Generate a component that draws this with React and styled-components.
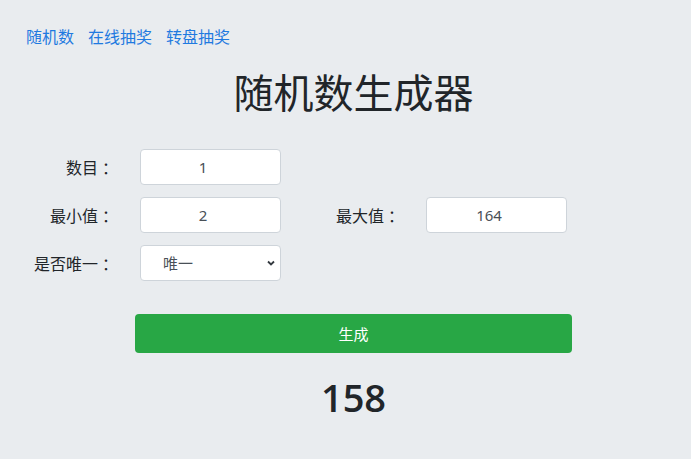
import React, { useState } from 'react'
import styled, { createGlobalStyle } from 'styled-components'

const GlobalStyle = createGlobalStyle`
  html, body {
    margin: 0;
    padding: 0;
    background: #e9ecef;
  }
  body {
    font-family: "Noto Sans", "Noto Sans CJK SC", sans-serif;
    font-size: 16px;
    color: #212529;
  }
`

const Page = styled.div`
  min-height: 459px;
  padding: 25px 0 0 26px;
  box-sizing: border-box;
`

const Nav = styled.nav`
  display: flex;
  gap: 14px;
  line-height: 24px;
`

const NavLink = styled.a`
  color: #1f7ae0;
  text-decoration: none;
  font-size: 16px;
`

const Main = styled.div`
  width: 437px;
  margin-left: 109px;
  display: flex;
  flex-direction: column;
  align-items: center;
`

const Title = styled.h1`
  margin: 20px 0 32px;
  font-size: 40px;
  font-weight: 400;
  line-height: 48px;
  white-space: nowrap;
`

const Form = styled.div`
  align-self: stretch;
  margin-left: -109px;
  display: flex;
  flex-direction: column;
  gap: 12px;
`

const Row = styled.div`
  display: flex;
  align-items: center;
  height: 36px;
`

const Label = styled.label`
  width: ${p => p.$width}px;
  margin-right: 26px;
  text-align: right;
  font-size: 16px;
  white-space: nowrap;
`

const Colon = styled.span`
  display: inline-block;
  padding-left: 4px;
  margin-right: -4px;
`

const Input = styled.input`
  width: 141px;
  height: 36px;
  box-sizing: border-box;
  border: 1px solid #ced4da;
  border-radius: 4px;
  background: #fff;
  text-align: center;
  font-family: "Noto Sans", sans-serif;
  font-size: 15px;
  color: #495057;
  padding: 0 8px;
  outline: none;
`

const SelectWrap = styled.div`
  position: relative;
  width: 141px;
  height: 36px;
`

const Select = styled.select`
  appearance: none;
  width: 100%;
  height: 100%;
  box-sizing: border-box;
  border: 1px solid #ced4da;
  border-radius: 4px;
  background: #fff;
  padding: 0 24px 0 22px;
  font-family: "Noto Sans", "Noto Sans CJK SC", sans-serif;
  font-size: 15px;
  color: #495057;
  outline: none;
`

const Chevron = styled.svg`
  position: absolute;
  right: 5px;
  top: 13px;
  pointer-events: none;
`

const Button = styled.button`
  margin-top: 33px;
  width: 437px;
  height: 39px;
  border: none;
  border-radius: 4px;
  background: #28a745;
  color: #fff;
  font-family: "Noto Sans", "Noto Sans CJK SC", sans-serif;
  font-size: 15px;
  cursor: pointer;
`

const Result = styled.div`
  margin-top: 20px;
  font-family: "Open Sans", "Noto Sans", sans-serif;
  font-size: 38px;
  font-weight: 600;
  line-height: 48px;
`

const Field = ({ label, width, children }) => (
  <>
    <Label $width={width}>
      {label}
      <Colon>：</Colon>
    </Label>
    {children}
  </>
)

export default function App() {
  const [count, setCount] = useState(1)
  const [min, setMin] = useState(2)
  const [max, setMax] = useState(164)
  const [unique, setUnique] = useState('1')
  const [result, setResult] = useState('158')

  const generate = () => {
    const lo = Number(min)
    const hi = Number(max)
    const n = Math.max(1, Number(count))
    const out = []
    while (out.length < n) {
      const v = lo + Math.floor(Math.random() * (hi - lo + 1))
      if (unique === '1' && out.includes(v) && out.length < hi - lo + 1) continue
      out.push(v)
    }
    setResult(out.join(', '))
  }

  return (
    <Page>
      <GlobalStyle />
      <Nav>
        <NavLink href="#">随机数</NavLink>
        <NavLink href="#">在线抽奖</NavLink>
        <NavLink href="#">转盘抽奖</NavLink>
      </Nav>
      <Main>
        <Title>随机数生成器</Title>
        <Form>
          <Row>
            <Field label="数目" width={88}>
              <Input type="number" value={count} onChange={e => setCount(e.target.value)} />
            </Field>
          </Row>
          <Row>
            <Field label="最小值" width={88}>
              <Input type="number" value={min} onChange={e => setMin(e.target.value)} />
            </Field>
            <Field label="最大值" width={119}>
              <Input type="number" value={max} onChange={e => setMax(e.target.value)} />
            </Field>
          </Row>
          <Row>
            <Field label="是否唯一" width={88}>
              <SelectWrap>
                <Select value={unique} onChange={e => setUnique(e.target.value)}>
                  <option value="1">唯一</option>
                  <option value="0">可重复</option>
                </Select>
                <Chevron width="10" height="10" viewBox="0 0 10 10">
                  <path d="M2 3.5 L5 6.5 L8 3.5" fill="none" stroke="#343a40" strokeWidth="1.8" />
                </Chevron>
              </SelectWrap>
            </Field>
          </Row>
        </Form>
        <Button onClick={generate}>生成</Button>
        <Result>{result}</Result>
      </Main>
    </Page>
  )
}
